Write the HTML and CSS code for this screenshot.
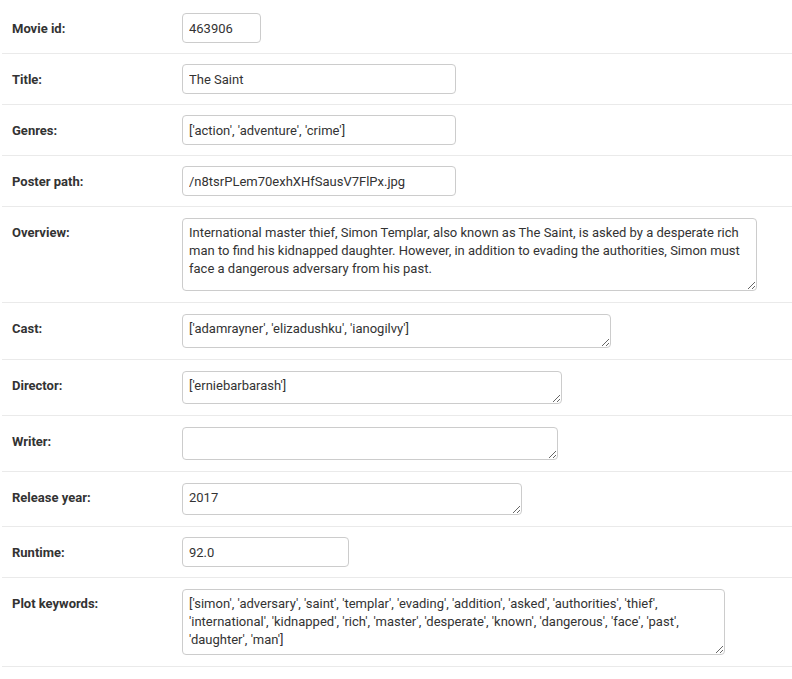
FILE: index.html
```html
<!DOCTYPE html>
<html>
<head>
<meta charset="utf-8">
<link rel="stylesheet" href="styles.css">
</head>
<body>
<fieldset class="module aligned">
  <div class="form-row">
    <label class="required">Movie id:</label>
    <input type="text" class="field w-id" value="463906">
  </div>
  <div class="form-row">
    <label class="required">Title:</label>
    <input type="text" class="field w-title" value="The Saint">
  </div>
  <div class="form-row">
    <label class="required">Genres:</label>
    <input type="text" class="field w-title" value="['action', 'adventure', 'crime']">
  </div>
  <div class="form-row">
    <label class="required">Poster path:</label>
    <input type="text" class="field w-title" value="/n8tsrPLem70exhXHfSausV7FlPx.jpg">
  </div>
  <div class="form-row">
    <label class="required">Overview:</label>
    <textarea class="field area w-overview">International master thief, Simon Templar, also known as The Saint, is asked by a desperate rich man to find his kidnapped daughter. However, in addition to evading the authorities, Simon must face a dangerous adversary from his past.</textarea>
  </div>
  <div class="form-row">
    <label class="required">Cast:</label>
    <textarea class="field area w-cast">['adamrayner', 'elizadushku', 'ianogilvy']</textarea>
  </div>
  <div class="form-row">
    <label class="required">Director:</label>
    <textarea class="field area w-director">['erniebarbarash']</textarea>
  </div>
  <div class="form-row">
    <label class="required">Writer:</label>
    <textarea class="field area w-writer"></textarea>
  </div>
  <div class="form-row">
    <label class="required">Release year:</label>
    <textarea class="field area w-year">2017</textarea>
  </div>
  <div class="form-row">
    <label class="required">Runtime:</label>
    <input type="text" class="field w-runtime" value="92.0">
  </div>
  <div class="form-row">
    <label class="required">Plot keywords:</label>
    <textarea class="field area w-plot">['simon', 'adversary', 'saint', 'templar', 'evading', 'addition', 'asked', 'authorities', 'thief', 'international', 'kidnapped', 'rich', 'master', 'desperate', 'known', 'dangerous', 'face', 'past', 'daughter', 'man']</textarea>
  </div>
</fieldset>
</body>
</html>
```

FILE: styles.css
```css
html, body {
  margin: 0;
  padding: 0;
  background: #fff;
}

body {
  font-family: Roboto, "Liberation Sans", sans-serif;
  font-size: 13px;
  color: #333;
}

.module {
  border: 0;
  margin: 0 0 0 2px;
  padding: 3px 0 0 0;
  min-width: 0;
}

.form-row {
  display: flex;
  align-items: flex-start;
  padding: 10px;
  border-bottom: 1px solid #eaeaea;
}

.form-row label {
  flex: 0 0 160px;
  padding: 7px 10px 0 0;
  font-weight: 700;
  line-height: 18px;
  color: #333;
}

.field {
  box-sizing: border-box;
  margin: 0;
  font-family: Roboto, "Liberation Sans", sans-serif;
  font-size: 13px;
  line-height: 18px;
  color: #333;
  background: #fff;
  border: 1px solid #ccc;
  border-radius: 4px;
  padding: 5px 6px;
  height: 30px;
  outline: none;
}

.area {
  display: block;
  margin-top: 1px;
  margin-bottom: 1px;
  resize: both;
  overflow: hidden;
}

.w-id { width: 79px; }
.w-title { width: 274px; }
.w-runtime { width: 167px; }
.w-overview { width: 575px; height: 73px; }
.w-cast { width: 429px; height: 34px; }
.w-director { width: 380px; height: 33px; }
.w-writer { width: 376px; height: 33px; }
.w-year { width: 340px; height: 32px; }
.w-plot { width: 543px; height: 66px; }
```
